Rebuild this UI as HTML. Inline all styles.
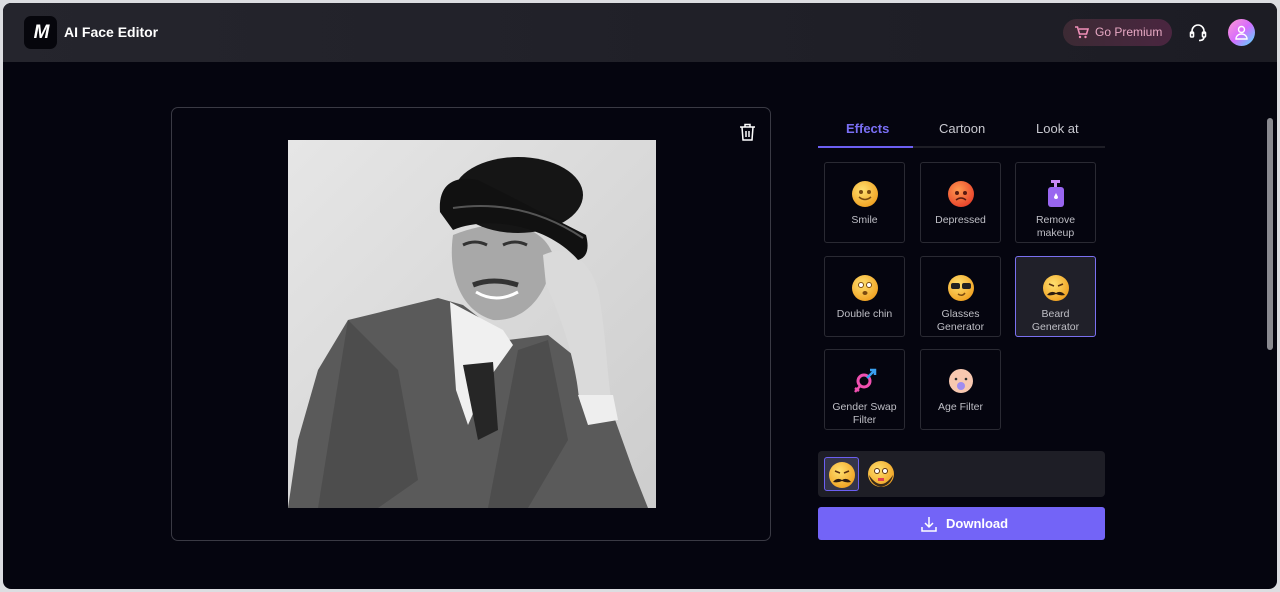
<!DOCTYPE html>
<html><head><meta charset="utf-8"><style>
*{box-sizing:border-box;margin:0;padding:0}
body{width:1280px;height:592px;background:#dcdde1;font-family:"Liberation Sans",sans-serif;overflow:hidden;position:relative}
.frame{position:absolute;left:3px;top:3px;width:1274px;height:586px;background:#05050f;border-radius:8px;overflow:hidden}
.hdr{position:absolute;left:0;top:0;width:100%;height:59px;background:linear-gradient(90deg,#25252d,#1c1c24)}
.logo{position:absolute;left:21px;top:13px;width:33px;height:33px;background:#06060c;border-radius:7px;color:#fff;font-weight:bold;font-style:italic;font-size:19px;text-align:center;line-height:33px;letter-spacing:-2px}
.title{position:absolute;left:61px;top:21px;color:#fff;font-weight:bold;font-size:14px}
.prem{position:absolute;left:1060px;top:16px;width:109px;height:27px;border-radius:14px;background:linear-gradient(90deg,#3c2a34,#4a2640);color:#e8a9c4;font-size:12px;line-height:27px;padding-left:32px}
.av{position:absolute;left:1225px;top:16px;width:27px;height:27px;border-radius:50%;background:linear-gradient(135deg,#ff9ad0,#d66bff 50%,#4be3ff)}
.panel{position:absolute;left:168px;top:104px;width:600px;height:434px;border:1px solid #3a3a44;border-radius:7px}
.photo{position:absolute;left:285px;top:137px;width:368px;height:368px;overflow:hidden}
.tabs{position:absolute;left:815px;top:110px;width:287px;height:35px;border-bottom:2px solid #1e1e26;color:#c9c9d0;font-size:13px}
.tabs span{position:absolute;top:8px}
.ul{position:absolute;left:0;bottom:-2px;width:95px;height:2px;background:#6c5ff2}
.tile{position:absolute;width:81px;height:81px;border:1px solid #2a2a33;border-radius:3px;color:#bfbfc6;font-size:10.5px;text-align:center;line-height:13px}
.tile svg{position:absolute;left:26px;top:17px}
.tile div{position:absolute;left:0;width:100%;top:51px}
.sel{border-color:#7a70f0;background:#202029}
.bar{position:absolute;left:815px;top:448px;width:287px;height:46px;background:#1e1e26;border-radius:4px}
.dl{position:absolute;left:815px;top:504px;width:287px;height:33px;background:#7364f7;border-radius:3px;color:#fff;font-weight:bold;font-size:13px;line-height:33px;padding-left:128px}
.sb{position:absolute;left:1267px;top:118px;width:6px;height:232px;background:#8a8a90;border-radius:3px}
</style></head><body>
<svg width="0" height="0" style="position:absolute"><defs>
<radialGradient id="y" cx="40%" cy="35%" r="70%"><stop offset="0" stop-color="#ffe070"/><stop offset="1" stop-color="#f0a020"/></radialGradient>
<radialGradient id="r" cx="40%" cy="35%" r="70%"><stop offset="0" stop-color="#ff9a50"/><stop offset="1" stop-color="#e8402a"/></radialGradient>
</defs></svg>
<div class="frame">
<div class="hdr">
<div class="logo">M</div><div class="title">AI Face Editor</div>
<div class="prem"><svg style="position:absolute;left:12px;top:7px" width="14" height="13" viewBox="0 0 14 13"><path d="M0 1h2.5l2 7h7l1.5-5H4" fill="none" stroke="#f08fb8" stroke-width="1.6"/><circle cx="5" cy="11" r="1.2" fill="#f08fb8"/><circle cx="10.5" cy="11" r="1.2" fill="#f08fb8"/></svg>Go Premium</div>
<svg style="position:absolute;left:1185px;top:20px" width="20" height="20" viewBox="0 0 20 20" fill="none" stroke="#fff" stroke-width="1.6"><path d="M4 11V8a6 6 0 0112 0v3"/><rect x="2.5" y="9" width="3" height="5" rx="1"/><rect x="14.5" y="9" width="3" height="5" rx="1"/><path d="M16 14c0 3-3 3.5-5 3.5"/></svg>
<div class="av"><svg style="position:absolute;left:7px;top:6px" width="13" height="15" viewBox="0 0 13 15" fill="none" stroke="#fff" stroke-width="1.4"><circle cx="6.5" cy="4.5" r="3"/><path d="M1 14c0-3 2.5-5 5.5-5s5.5 2 5.5 5z"/></svg></div>
</div>
<div class="panel"><svg style="position:absolute;left:567px;top:15px" width="17" height="18" viewBox="0 0 17 18" fill="none" stroke="#fff" stroke-width="1.5"><path d="M1 4h15M6 4V1.5h5V4M3 4l1 13h9l1-13M7 8v6M10 8v6"/></svg></div>
<div class="photo"><svg width="368" height="368" viewBox="0 0 368 368">
<defs><linearGradient id="bg" x1="0" y1="0" x2="1" y2="1"><stop offset="0" stop-color="#e6e6e6"/><stop offset="1" stop-color="#cdcdcd"/></linearGradient></defs>
<rect width="368" height="368" fill="url(#bg)"/>
<path d="M0 368L10 300 30 230 60 180 150 158 175 165 220 200 260 195 285 215 320 260 345 330 360 368Z" fill="#5a5a5a"/>
<path d="M162 162L168 250 180 285 200 240 225 205 215 190Z" fill="#f0f0f0"/>
<path d="M175 225L205 222 210 290 190 300Z" fill="#262626"/>
<path d="M60 180L110 230 130 340 90 368 30 368Z" fill="#4d4d4d"/>
<path d="M230 210L260 200 280 300 240 368 200 368Z" fill="#4d4d4d"/>
<path d="M165 95C160 130 170 170 205 180 240 182 262 150 265 115 255 85 215 75 165 95Z" fill="#a8a8a8"/>
<path d="M175 105q12-6 24 0M215 105q12-6 24 0" stroke="#333" stroke-width="3" fill="none"/>
<path d="M185 145q20-8 45 0" stroke="#333" stroke-width="5" fill="none"/>
<path d="M188 152q20 12 42 0" stroke="#fff" stroke-width="3" fill="none"/>
<path d="M255 115C275 105 300 115 310 150 318 190 320 250 325 270 300 280 292 270 290 250 285 210 270 170 258 145Z" fill="#dadada"/>
<path d="M290 255L325 255 330 280 300 285Z" fill="#eee"/>
<ellipse cx="230" cy="55" rx="65" ry="38" fill="#151515"/>
<path d="M152 72C150 45 165 35 190 40L298 95C302 110 298 118 290 120 260 85 200 75 165 90Z" fill="#111"/>
<path d="M165 68q70-10 130 30" stroke="#555" stroke-width="2" fill="none"/>
</svg></div>
<div class="tabs"><span style="left:28px;color:#7a6ff5;font-weight:bold">Effects</span><span style="left:121px">Cartoon</span><span style="left:218px">Look at</span><div class="ul"></div></div>

<div class="tile" style="left:821px;top:159px"><svg width="28" height="28"><circle cx="14" cy="14" r="13" fill="url(#y)"/><path d="M8 17q6 5 12 0" stroke="#7a4a10" stroke-width="1.5" fill="none"/><circle cx="10" cy="12" r="2" fill="#7a4a10"/><circle cx="18" cy="12" r="2" fill="#7a4a10"/></svg><div>Smile</div></div>
<div class="tile" style="left:917px;top:159px"><svg width="28" height="28"><circle cx="14" cy="14" r="13" fill="url(#r)"/><path d="M9 20q5-4 10 0" stroke="#5a1a10" stroke-width="1.5" fill="none"/><circle cx="10" cy="13" r="2" fill="#5a1a10"/><circle cx="18" cy="13" r="2" fill="#5a1a10"/></svg><div>Depressed</div></div>
<div class="tile" style="left:1012px;top:159px"><svg width="28" height="28"><rect x="9" y="0" width="9" height="3" fill="#c88af5"/><rect x="12" y="2" width="3" height="5" fill="#c88af5"/><rect x="6" y="7" width="16" height="20" rx="3" fill="#9966f0"/><path d="M14 13l2 4a2 2 0 01-4 0z" fill="#fff"/></svg><div>Remove<br>makeup</div></div>

<div class="tile" style="left:821px;top:253px"><svg width="28" height="28"><circle cx="14" cy="14" r="13" fill="url(#y)"/><circle cx="10" cy="11" r="2.5" fill="#fff" stroke="#7a4a10"/><circle cx="18" cy="11" r="2.5" fill="#fff" stroke="#7a4a10"/><ellipse cx="14" cy="19" rx="2.5" ry="2" fill="#7a4a10"/></svg><div>Double chin</div></div>
<div class="tile" style="left:917px;top:253px"><svg width="28" height="28"><circle cx="14" cy="14" r="13" fill="url(#y)"/><rect x="4" y="9" width="9" height="6" rx="2" fill="#222"/><rect x="15" y="9" width="9" height="6" rx="2" fill="#222"/><path d="M11 20q4 3 7-1" stroke="#7a4a10" stroke-width="1.5" fill="none"/></svg><div>Glasses<br>Generator</div></div>
<div class="tile sel" style="left:1012px;top:253px"><svg width="28" height="28"><circle cx="14" cy="14" r="13" fill="url(#y)"/><path d="M7 10l5 2M21 10l-5 2" stroke="#5a3010" stroke-width="1.5"/><path d="M5 21q4-5 9-2 5-3 9 2-5 1-9-1-4 2-9 1z" fill="#2a1a10"/></svg><div>Beard<br>Generator</div></div>

<div class="tile" style="left:821px;top:346px"><svg width="28" height="28"><circle cx="13" cy="14" r="6" fill="none" stroke="#f050b0" stroke-width="3"/><path d="M9 19l-5 6M4 21l4 3" stroke="#f050b0" stroke-width="2.5"/><path d="M16 11l8-8M19 3h5v5" stroke="#3aa0f0" stroke-width="2.5" fill="none"/></svg><div>Gender Swap<br>Filter</div></div>
<div class="tile" style="left:917px;top:346px"><svg width="28" height="28"><circle cx="14" cy="14" r="12" fill="#f8c8b0"/><circle cx="14" cy="19" r="4" fill="#a08cf0"/><circle cx="9" cy="12" r="1.3" fill="#333"/><circle cx="19" cy="12" r="1.3" fill="#333"/></svg><div>Age Filter</div></div>

<div class="bar"><div style="position:absolute;left:6px;top:6px;width:35px;height:34px;border:1px solid #6c5ff2;border-radius:3px;background:#35354a"><svg style="position:absolute;left:3px;top:3px" width="28" height="28"><circle cx="14" cy="14" r="13" fill="url(#y)"/><path d="M7 10l5 2M21 10l-5 2" stroke="#5a3010" stroke-width="1.5"/><path d="M5 21q4-5 9-2 5-3 9 2-5 1-9-1-4 2-9 1z" fill="#2a1a10"/></svg></div>
<svg style="position:absolute;left:49px;top:9px" width="28" height="28"><circle cx="14" cy="14" r="13" fill="url(#y)"/><path d="M2 15q12 18 24 0q-2 10-12 12-10-2-12-12z" fill="#3a2a1a"/><circle cx="10" cy="11" r="2.5" fill="#fff" stroke="#5a3010"/><circle cx="18" cy="11" r="2.5" fill="#fff" stroke="#5a3010"/><rect x="11" y="18" width="6" height="3" fill="#e04050"/></svg></div>
<div class="dl"><svg style="position:absolute;left:103px;top:9px" width="16" height="16" viewBox="0 0 16 16" fill="none" stroke="#fff" stroke-width="1.5"><path d="M8 1v10M4 7l4 4 4-4M1 11v4h14v-4"/></svg>Download</div>
</div>
<div class="sb"></div>
</body></html>
